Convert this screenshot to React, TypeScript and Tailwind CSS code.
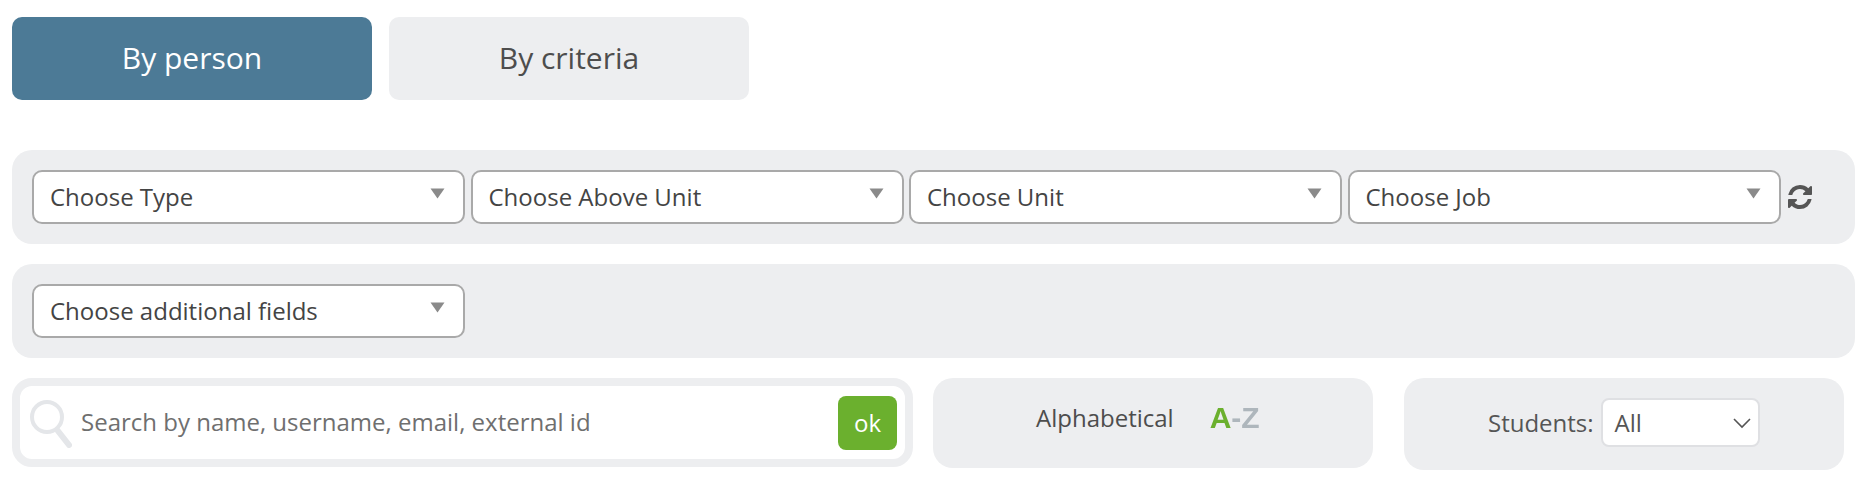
const font = "font-['Open_Sans',sans-serif]";

function ChosenSelect({ label }: { label: string }) {
  return (
    <div className="flex h-[54px] w-[433px] shrink-0 items-center justify-between rounded-[10px] border-2 border-[#a9a9a9] bg-white pl-[16px] pr-[18px]">
      <span className="text-[24px] leading-none text-[#444]">{label}</span>
      {/* small grey arrow */}
      <svg width="15" height="11" viewBox="0 0 15 11" className="mb-[7px]">
        <path d="M0.5 0.5h14L7.5 10.5z" fill="#8a8a8a" />
      </svg>
    </div>
  );
}

export default function App() {
  return (
    <div className={`${font} min-h-screen bg-white pl-[12px] pt-[17px]`}>
      {/* Tabs */}
      <div className="flex gap-[17px]">
        <div className="flex h-[83px] w-[360px] items-center justify-center rounded-[10px] bg-[#4c7a96] pb-[3px] text-[30px] text-white">
          By person
        </div>
        <div className="flex h-[83px] w-[360px] items-center justify-center rounded-[10px] bg-[#edeef0] pb-[3px] text-[30px] text-[#4d4d4d]">
          By criteria
        </div>
      </div>

      {/* Filters */}
      <div className="mt-[50px] flex h-[94px] w-[1843px] items-center gap-[5.5px] rounded-[20px] bg-[#edeef0] pb-[1px] pl-[20px]">
        <ChosenSelect label="Choose Type" />
        <ChosenSelect label="Choose Above Unit" />
        <ChosenSelect label="Choose Unit" />
        <ChosenSelect label="Choose Job" />
        <svg width="24" height="24" viewBox="128 128 1536 1536" className="ml-[2px] text-[#555]">
          <path
            fill="currentColor"
            d="M1639 1056q0 5-1 7-64 268-268 434.500t-478 166.500q-146 0-282.500-55t-243.500-157l-129 129q-19 19-45 19t-45-19-19-45v-448q0-26 19-45t45-19h448q26 0 45 19t19 45-19 45l-137 137q71 66 161 102t187 36q134 0 250-65t186-179q11-17 53-117 8-23 30-23h192q13 0 22.500 9.500t9.500 22.500zm25-800v448q0 26-19 45t-45 19h-448q-26 0-45-19t-19-45 19-45l138-138q-148-137-349-137-134 0-250 65t-186 179q-11 17-53 117-8 23-30 23h-199q-13 0-22.500-9.500t-9.500-22.500v-7q65-268 270-434.500t480-166.500q146 0 284 55.500t245 156.500l130-129q19-19 45-19t45 19 19 45z"
          />
        </svg>
      </div>

      <div className="mt-[20px] flex h-[94px] w-[1843px] items-center rounded-[20px] bg-[#edeef0] pb-[1px] pl-[20px]">
        <ChosenSelect label="Choose additional fields" />
      </div>

      {/* Search and sorting */}
      <div className="mt-[20px] flex items-start">
        <div className="flex h-[89px] w-[901px] items-center rounded-[20px] border-[8px] border-[#edeef0] bg-white pl-[10px] pr-[8px]">
          <svg width="43" height="48" viewBox="0 0 43 48" className="mt-[2px] shrink-0 text-[#e4e6e9] blur-[0.4px]">
            <circle cx="17" cy="17" r="15" fill="none" stroke="currentColor" strokeWidth="4" />
            <path d="M28 31l11 14" fill="none" stroke="currentColor" strokeWidth="6" strokeLinecap="round" />
          </svg>
          <span className="ml-[8px] flex-1 pb-[1px] text-[24px] text-[#6f6f6f]">Search by name, username, email, external id</span>
          <button className="h-[54px] w-[59px] rounded-[8px] bg-[#6bb02e] text-[24px] text-white">ok</button>
        </div>

        <div className="ml-[20px] flex h-[90px] w-[440px] items-center rounded-[20px] bg-[#edeef0] pb-[10px] pl-[103px]">
          <span className="text-[24px] text-[#4d4d4d]">Alphabetical</span>
          <span className="ml-[36px] font-['Liberation_Sans',sans-serif] text-[30px] leading-none font-bold blur-[0.5px]">
            <span className="text-[#6bb02e]">A</span>
            <span className="text-[#aeb6bc]">-Z</span>
          </span>
        </div>

        <div className="ml-[31px] flex h-[92px] w-[440px] items-center rounded-[20px] bg-[#edeef0] pb-[3px] pl-[84px]">
          <span className="text-[24px] text-[#555]">Students:</span>
          <div className="ml-[7px] flex h-[49px] w-[159px] items-center justify-between rounded-[8px] border-2 border-[#dfe0e3] bg-white pl-[12px] pr-[6px]">
            <span className="text-[24px] text-[#555]">All</span>
            <svg width="20" height="12" viewBox="0 0 20 12" className="text-[#555]">
              <path d="M2 2l8 8 8-8" fill="none" stroke="currentColor" strokeWidth="1.6" />
            </svg>
          </div>
        </div>
      </div>
    </div>
  );
}
